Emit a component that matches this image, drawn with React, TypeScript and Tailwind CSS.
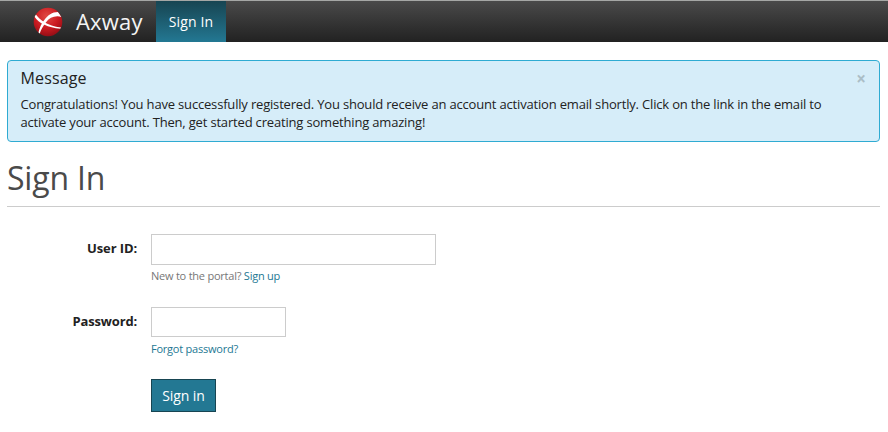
function Logo() {
  return (
    <svg width="30" height="30" viewBox="0 0 30 30" aria-hidden="true">
      <defs>
        <radialGradient id="ball" cx="0.45" cy="0.3" r="0.75">
          <stop offset="0" stopColor="#e04a44" />
          <stop offset="0.55" stopColor="#cb1b21" />
          <stop offset="1" stopColor="#8c0c14" />
        </radialGradient>
        <clipPath id="ballClip">
          <circle cx="15" cy="15" r="14.3" />
        </clipPath>
      </defs>
      <circle cx="15" cy="15" r="14.3" fill="url(#ball)" />
      <g clipPath="url(#ballClip)" fill="#fff">
        <path d="M2.500 7 C7 13.500 14 18.500 28 20.600 L27.500 21.800 C15 20.500 6 16.500 1.300 9.500 Z" />
        <path d="M25 5 L28.500 9.900 C22 8.200 16.500 10.500 12.800 15.500 C10 19 8 22.500 6.600 27 L5.300 26 C6.500 20.500 8.500 16.500 11.300 13 C15 8 19 5 25 5 Z" />
      </g>
    </svg>
  );
}

export default function App() {
  return (
    <div className="h-[432px] w-[888px] overflow-hidden bg-white font-['Open_Sans','Noto_Sans',sans-serif] text-[13px] leading-[18px] text-[#222]">
      <header className="flex h-[42px] border-t border-[#a5a7a5] bg-linear-to-b from-[#4a4a4a] to-[#222] pl-[33px]">
        <a className="flex w-[123px] items-center pt-px">
          <Logo />
          <span className="ml-[13px] -mt-[2px] text-[22px] leading-[30px] tracking-[0.2px] text-[#f4f4f4]">Axway</span>
        </a>
        <a className="flex w-[70px] items-center justify-center bg-linear-to-b from-[#174552] to-[#237893] text-[14px] tracking-[0.15px] text-white">
          Sign In
        </a>
      </header>
      <main className="pt-[18px] pr-2 pl-[7px]">
        <section className="flex h-[82px] justify-between rounded-[4px] border border-[#2fabd2] bg-[#d6edf9] pt-[7px] pr-[13px] pl-[12.500px]">
          <div>
            <h4 className="text-[16px] leading-[20px] tracking-[0.15px]">Message</h4>
            <p className="mt-[7px] tracking-[-0.178px] whitespace-nowrap">
              Congratulations! You have successfully registered. You should receive an account activation email shortly. Click on the link in the email to
              <br />
              activate your account. Then, get started creating something amazing!
            </p>
          </div>
          <button className="mt-[2px] h-[18px] text-[17px] leading-[18px] font-bold text-[#abbec7]">×</button>
        </section>
        <h1 className="h-[65px] border-b border-[#ccc] pt-[13px] text-[32px] leading-[46px] tracking-[-0.2px] text-[#4a4a4a]">Sign In</h1>
        <form className="pt-[27px]">
          <div className="flex h-[73px]">
            <label className="w-[130px] pt-[5px] text-right font-bold tracking-[-0.12px]">User ID:</label>
            <div className="ml-[14px]">
              <input className="block h-[31px] w-[285px] border border-[#ccc] bg-white" />
              <p className="mt-[2px] text-[11px] tracking-[-0.23px] text-[#777]">
                New to the portal? <a className="text-[#237893]">Sign up</a>
              </p>
            </div>
          </div>
          <div className="flex h-[72px]">
            <label className="w-[130px] pt-[5px] text-right font-bold tracking-[-0.16px]">Password:</label>
            <div className="ml-[14px]">
              <input type="password" className="block h-[30px] w-[135px] border border-[#ccc] bg-white" />
              <p className="mt-[3px] text-[11px] tracking-[-0.23px] text-[#237893]">Forgot password?</p>
            </div>
          </div>
          <button type="button" className="ml-[144px] h-[33px] w-[65px] border border-[#174552] bg-[#237893] text-[14px] tracking-[-0.1px] text-white">
            Sign in
          </button>
        </form>
      </main>
    </div>
  );
}
